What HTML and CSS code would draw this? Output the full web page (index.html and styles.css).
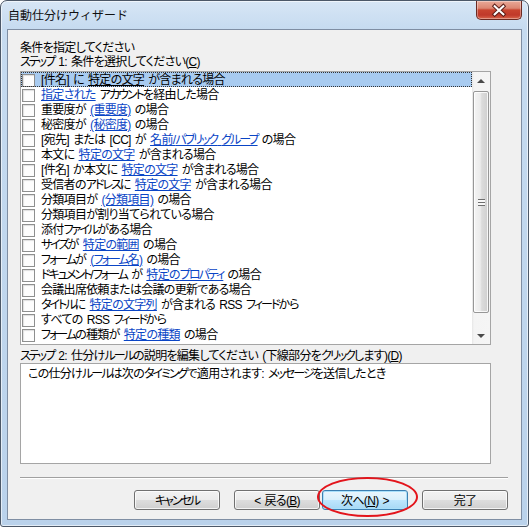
FILE: index.html
```html
<!DOCTYPE html>
<html lang="ja">
<head>
<meta charset="utf-8">
<title>自動仕分けウィザード</title>
<link rel="stylesheet" href="styles.css">
</head>
<body>
<div class="window">
  <div class="titlebar">
    <span class="title">自動仕分けウィザード</span>
    <div class="close">
      <svg width="46" height="19" viewBox="0 0 46 19">
        <path d="M18.5 5 L27.5 13.5 M27.5 5 L18.5 13.5" stroke="#5a1d17" stroke-width="4.2" stroke-linecap="square" fill="none"/>
        <path d="M18.5 5 L27.5 13.5 M27.5 5 L18.5 13.5" stroke="#ffffff" stroke-width="2.2" stroke-linecap="square" fill="none"/>
      </svg>
    </div>
  </div>
  <div class="client">
    <div class="label"><span class="t">条件を指定してください</span></div>
    <div class="label"><span class="t"><span class="k">ステップ</span> 1: 条件を選択してください(<u>C</u>)</span></div>
    <div class="listbox">
      <div class="rows">
        <div class="row sel"><span class="cb"></span><span class="txt">[件名] に <span class="lnk">特定の文字</span> が含まれる場合</span></div>
        <div class="row"><span class="cb"></span><span class="txt"><span class="lnk">指定された</span> <span class="k">アカウント</span>を経由した場合</span></div>
        <div class="row"><span class="cb"></span><span class="txt">重要度が <span class="lnk">(重要度)</span> の場合</span></div>
        <div class="row"><span class="cb"></span><span class="txt">秘密度が <span class="lnk">(秘密度)</span> の場合</span></div>
        <div class="row"><span class="cb"></span><span class="txt">[宛先] または [CC] が <span class="lnk">名前/<span class="k">パブリック</span> <span class="k">グループ</span></span> の場合</span></div>
        <div class="row"><span class="cb"></span><span class="txt">本文に <span class="lnk">特定の文字</span> が含まれる場合</span></div>
        <div class="row"><span class="cb"></span><span class="txt">[件名] か本文に <span class="lnk">特定の文字</span> が含まれる場合</span></div>
        <div class="row"><span class="cb"></span><span class="txt">受信者の<span class="k">アドレス</span>に <span class="lnk">特定の文字</span> が含まれる場合</span></div>
        <div class="row"><span class="cb"></span><span class="txt">分類項目が <span class="lnk">(分類項目)</span> の場合</span></div>
        <div class="row"><span class="cb"></span><span class="txt">分類項目が割り当てられている場合</span></div>
        <div class="row"><span class="cb"></span><span class="txt">添付<span class="k">ファイル</span>がある場合</span></div>
        <div class="row"><span class="cb"></span><span class="txt"><span class="k">サイズ</span>が <span class="lnk">特定の範囲</span> の場合</span></div>
        <div class="row"><span class="cb"></span><span class="txt"><span class="k">フォーム</span>が <span class="lnk">(<span class="k">フォーム</span>名)</span> の場合</span></div>
        <div class="row"><span class="cb"></span><span class="txt"><span class="k">ドキュメント</span>/<span class="k">フォーム</span> が <span class="lnk">特定の<span class="k">プロパティ</span></span> の場合</span></div>
        <div class="row"><span class="cb"></span><span class="txt">会議出席依頼または会議の更新である場合</span></div>
        <div class="row"><span class="cb"></span><span class="txt"><span class="k">タイトル</span>に <span class="lnk">特定の文字列</span> が含まれる RSS <span class="k">フィード</span>から</span></div>
        <div class="row"><span class="cb"></span><span class="txt">すべての RSS <span class="k">フィード</span>から</span></div>
        <div class="row"><span class="cb"></span><span class="txt"><span class="k">フォーム</span>の種類が <span class="lnk">特定の種類</span> の場合</span></div>
      </div>
      <div class="scrollbar">
        <div class="sb-btn"><span class="arrow-up"></span></div>
        <div class="sb-track">
          <div class="thumb"><span class="grip"></span></div>
        </div>
        <div class="sb-btn"><span class="arrow-down"></span></div>
      </div>
    </div>
    <div class="label step2"><span class="t"><span class="k">ステップ</span> 2: 仕分け<span class="k">ルール</span>の説明を編集してください (下線部分を<span class="k">クリック</span>します)(<u>D</u>)</span></div>
    <div class="desc"><span class="t">この仕分け<span class="k">ルール</span>は次の<span class="k">タイミング</span>で適用されます: <span class="k">メッセージ</span>を送信したとき</span></div>
    <div class="sep"></div>
    <div class="buttons">
      <div class="btn cancel"><span class="t"><span class="k">キャンセル</span></span></div>
      <div class="btn back"><span class="t">&lt; 戻る(<u>B</u>)</span></div>
      <div class="btn next default"><span class="t">次へ(<u>N</u>) &gt;</span></div>
      <div class="btn"><span class="t">完了</span></div>
    </div>
  </div>
  <div class="annot"></div>
</div>
</body>
</html>
```
FILE: styles.css
```css
* { box-sizing: border-box; }
html, body { margin: 0; padding: 0; }
body {
  width: 529px;
  height: 527px;
  overflow: hidden;
  background: #ffffff;
  font-family: "Liberation Sans", "Noto Sans CJK JP", sans-serif;
  font-size: 12px;
  color: #000;
}
.window {
  position: relative;
  width: 529px;
  height: 527px;
  border: 1px solid #4c5868;
  border-radius: 7px 7px 3px 3px;
  background: linear-gradient(to bottom, #d7e6f5 0px, #c6dbf0 28px, #bad2eb 100%);
  box-shadow: inset 0 0 0 1px rgba(255,255,255,0.6);
  display: flex;
  flex-direction: column;
  padding: 0 6px 6px 6px;
}
.titlebar {
  height: 28px;
  display: flex;
  align-items: flex-start;
  justify-content: space-between;
}
.title {
  display: inline-block;
  margin: 8px 0 0 1px;
  line-height: 14px;
  height: 14px;
  font-size: 12px;
  color: #111;
}
.close {
  width: 46px;
  height: 19px;
  border: 1px solid #6b2a22;
  border-top: none;
  border-radius: 0 0 5px 5px;
  background: linear-gradient(to bottom, #e9a998 0%, #dc8672 40%, #c8442f 50%, #c0392a 78%, #d8664c 100%);
  box-shadow: inset 0 0 0 1px rgba(255,255,255,0.35);
  display: flex;
}
.close svg { display: block; }
.client {
  flex: 1;
  background: #f0f0f0;
  border: 1px solid #7f8ea3;
  padding: 10px 13px 0 12px;
  display: flex;
  flex-direction: column;
  font-feature-settings: "palt" 1;
  letter-spacing: -0.7px;
  word-spacing: 1.5px;
}
.k { letter-spacing: -2px; }
.t {
  display: inline-block;
  vertical-align: top;
}
.label {
  line-height: 14px;
  height: 14px;
  white-space: nowrap;
}
.label .t { height: 14px; padding-top: 1px; }
.listbox {
  margin-top: 3px;
  width: 471px;
  height: 274px;
  border: 1px solid #a5a5a5;
  background: #fff;
  display: flex;
}
.rows {
  flex: 1;
  overflow: hidden;
}
.row {
  height: 15px;
  display: flex;
  align-items: flex-start;
  padding-left: 1px;
  white-space: nowrap;
}
.row.sel {
  background: #a8cbf0;
  outline: 1px dotted #333;
  outline-offset: -1px;
}
.cb {
  width: 13px;
  height: 13px;
  margin-top: 2px;
  flex: none;
  border: 1px solid #8e8f8f;
  background: #fdfdfd;
  box-shadow: inset 1px 1px 1px #dedede;
}
.txt {
  display: inline-block;
  height: 15px;
  padding-top: 1px;
  margin-left: 6px;
  line-height: 14px;
}
.lnk {
  color: #0a45c6;
  text-decoration: underline;
}
.row.sel .lnk { color: #000; }
.scrollbar {
  width: 18px;
  flex: none;
  display: flex;
  flex-direction: column;
  background: linear-gradient(to right, #e6e6e6 0, #f4f4f4 2px, #f5f5f5 100%);
}
.sb-btn {
  height: 17px;
  flex: none;
  display: flex;
  align-items: center;
  justify-content: center;
}
.arrow-up {
  width: 0; height: 0;
  border-left: 4px solid transparent;
  border-right: 4px solid transparent;
  border-bottom: 4px solid #4a4a4a;
}
.arrow-down {
  width: 0; height: 0;
  border-left: 4px solid transparent;
  border-right: 4px solid transparent;
  border-top: 4px solid #4a4a4a;
}
.sb-track {
  flex: 1;
  padding: 2px 1px 0 1px;
}
.thumb {
  height: 222px;
  border: 1px solid #979797;
  border-radius: 2px;
  background: linear-gradient(to right, #f4f4f4 0%, #ebebeb 45%, #dcdcdc 55%, #cfcfcf 100%);
  box-shadow: inset 0 0 0 1px rgba(255,255,255,0.8);
  display: flex;
  align-items: center;
  justify-content: center;
}
.grip {
  width: 7px;
  height: 7px;
  background: repeating-linear-gradient(to bottom, #6e6e6e 0, #6e6e6e 1px, #f8f8f8 1px, #f8f8f8 3px);
}
.step2 {
  margin-top: 3px;
}
.desc {
  margin-top: 1px;
  width: 471px;
  height: 101px;
  border: 1px solid #a5a5a5;
  background: #fff;
  padding: 2px 7px;
  line-height: 15px;
  white-space: nowrap;
}
.desc .t { height: 15px; padding-top: 1px; line-height: 14px; }
.sep {
  margin-top: 13px;
  height: 2px;
  border-top: 1px solid #a0a0a0;
  border-bottom: 1px solid #ffffff;
}
.buttons {
  margin-top: 11px;
  display: flex;
  justify-content: flex-end;
}
.btn {
  width: 86px;
  height: 20px;
  border: 1px solid #707070;
  border-radius: 3px;
  background: linear-gradient(to bottom, #f2f2f2 0%, #ebebeb 50%, #dddddd 51%, #cfcfcf 100%);
  box-shadow: inset 0 0 0 1px rgba(255,255,255,0.75);
  display: flex;
  align-items: center;
  justify-content: center;
  line-height: 14px;
  white-space: nowrap;
}
.btn .t { height: 14px; padding-top: 1px; }
.btn.cancel { margin-right: 14px; }
.btn.back { margin-right: 2px; }
.btn.next { margin-right: 14px; }
.btn.default {
  border-color: #3c7fb1;
  background: linear-gradient(to bottom, #eaf6fd 0%, #d9f0fc 50%, #bee6fd 51%, #a7d9f5 100%);
  box-shadow: inset 0 0 0 1px #a9e0fb;
}
.annot {
  position: absolute;
  left: 316px;
  top: 476px;
  width: 101px;
  height: 40px;
  border: 2px solid #e3141b;
  border-radius: 50%;
}
```
